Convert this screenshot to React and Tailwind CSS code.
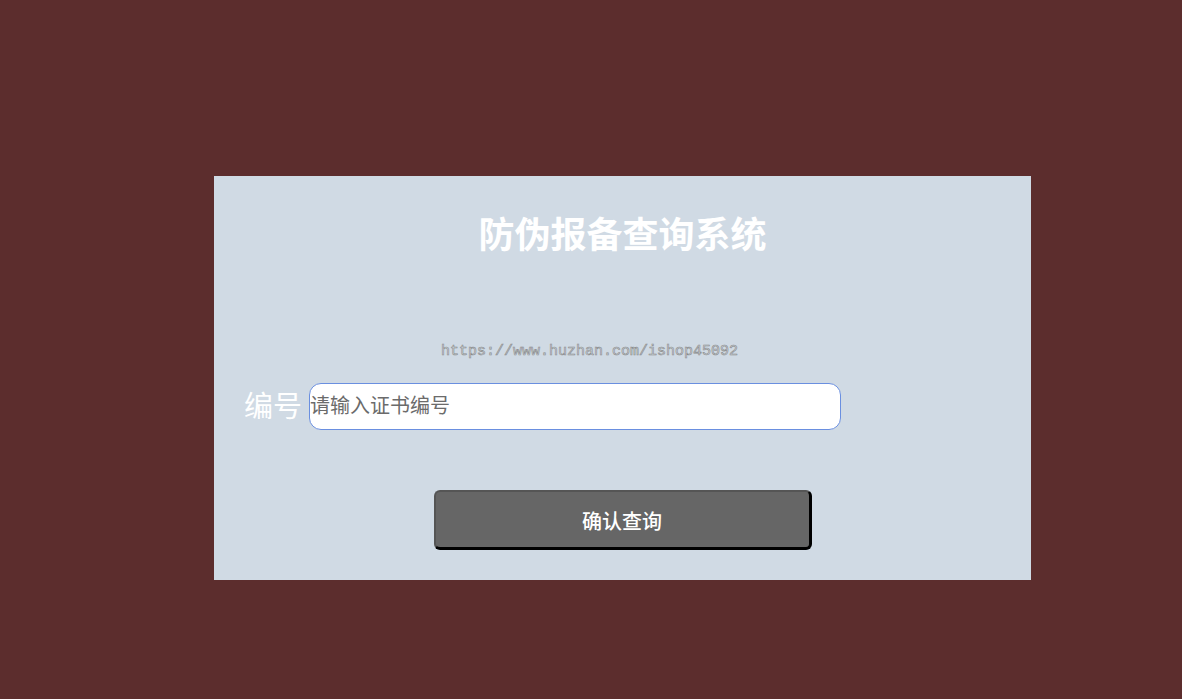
export default function App() {
  return (
    <div className="min-h-[699px] w-full bg-[#5c2d2d] pt-[176px] font-['Liberation_Sans','Noto_Sans_CJK_SC',sans-serif]">
      <div className="ml-[214px] flex h-[404px] w-[817px] flex-col bg-[#d0dae4]">
        <h1 className="mt-[36px] text-center text-[36px] font-bold leading-[48px] text-white">防伪报备查询系统</h1>

        <div className="ml-[227px] mt-[82px] font-['Liberation_Mono',monospace] text-[15px] leading-[20px] text-[#d0dae4] [-webkit-text-stroke:0.6px_#8a8a8a]">
          https://www.huzhan.com/ishop45092
        </div>

        <div className="ml-[30px] mt-[21px] flex items-center gap-[7px]">
          <label className="text-[29px] leading-[36px] text-white">编号</label>
          <input
            type="text"
            placeholder="请输入证书编号"
            className="h-[47px] w-[532px] rounded-[12px] border border-[#6a8fe0] bg-white px-0 text-[20px] text-[#333] outline-none placeholder:text-[#6b6b6b]"
          />
        </div>

        <button className="mx-auto mt-[60px] h-[60px] w-[378px] rounded-[6px] border-[2px] border-b-[3px] border-r-[3px] border-l-[#555] border-t-[#555] border-b-black border-r-black bg-[#666] pt-[4px] text-[20px] font-medium text-white">
          确认查询
        </button>
      </div>
    </div>
  );
}
